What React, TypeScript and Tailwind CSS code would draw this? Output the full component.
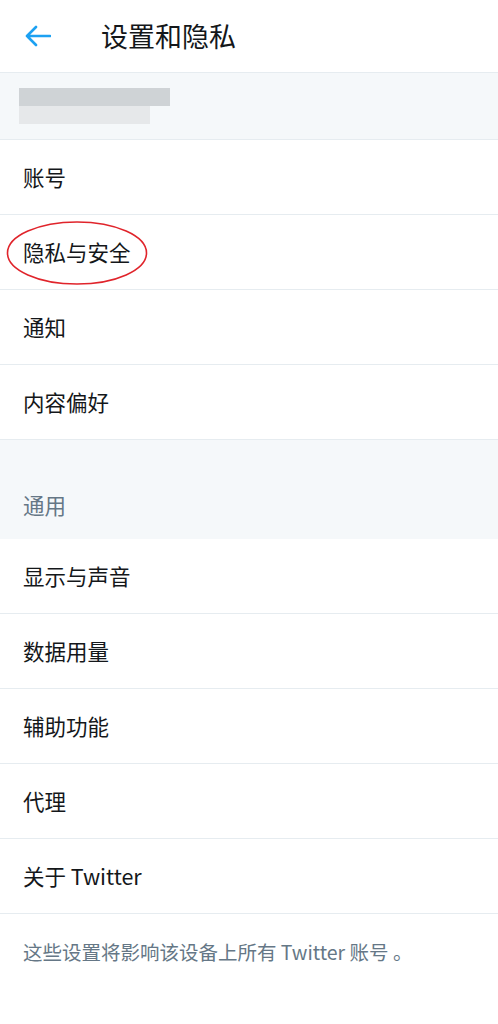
import React from "react";

const font = { fontFamily: '"Noto Sans CJK SC", "Noto Sans", sans-serif' };

function Row({ label, circled }: { label: string; circled?: boolean }) {
    return (
        <div className="relative flex items-center h-[75px] px-[23px] bg-white border-b border-[#e6ecf0]">
            <span className="text-[21.5px] text-[#14171a]">{label}</span>
            {circled && (
                <svg className="absolute left-[5px] top-[5px]" width="144" height="66" viewBox="0 0 144 66">
                    <ellipse cx="72" cy="33" rx="69.5" ry="31" fill="none" stroke="#e0242b" strokeWidth="1.6" />
                </svg>
            )}
        </div>
    );
}

export default function App() {
    const first = ["账号", "隐私与安全", "通知", "内容偏好"];
    const second = ["显示与声音", "数据用量", "辅助功能", "代理", "关于 Twitter"];

    return (
        <div className="w-[498px] h-[1024px] bg-white overflow-hidden" style={font}>
            <div className="flex items-center h-[73px] border-b border-[#e6ecf0] bg-white">
                <svg className="ml-[25px]" width="26" height="22" viewBox="0 0 26 22">
                    <path d="M11 2 L2 11 L11 20 M2 11 H25" fill="none" stroke="#1da1f2" strokeWidth="2.6" strokeLinecap="round" strokeLinejoin="round" />
                </svg>
                <span className="ml-[50px] text-[27px] text-[#14171a]">设置和隐私</span>
            </div>

            <div className="h-[67px] bg-[#f5f8fa] border-b border-[#e6ecf0] flex flex-col justify-center px-[19px]">
                <div className="w-[151px] h-[18px] bg-[#cfd3d6]" />
                <div className="w-[131px] h-[18px] bg-[#e6e8ea]" />
            </div>

            {first.map((l) => (
                <Row key={l} label={l} circled={l === "隐私与安全"} />
            ))}

            <div className="h-[99px] bg-[#f5f8fa] flex items-end px-[23px] pb-[18px]">
                <span className="text-[21.5px] text-[#657786]">通用</span>
            </div>

            {second.map((l) => (
                <Row key={l} label={l} />
            ))}

            <div className="px-[23px] pt-[23px]">
                <p className="text-[19.5px] text-[#657786]">这些设置将影响该设备上所有 Twitter 账号 。</p>
            </div>
        </div>
    );
}
